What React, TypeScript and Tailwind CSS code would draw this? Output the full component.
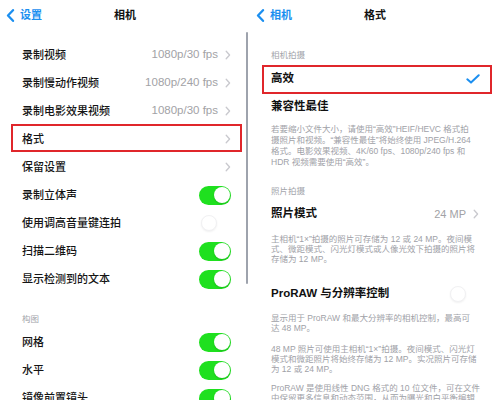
import React from 'react';

const font = { fontFamily: '"Liberation Sans", "Noto Sans CJK SC", sans-serif' };

function BackChevron() {
  return (
    <svg width="9" height="13" viewBox="0 0 9 13" className="shrink-0">
      <path d="M7 1.2 L2 6.5 L7 11.8" fill="none" stroke="#1b8ff0" strokeWidth="2.3" strokeLinecap="round" strokeLinejoin="round" />
    </svg>
  );
}

function SmallChevron() {
  return (
    <svg width="6" height="10" viewBox="0 0 6 10" className="shrink-0">
      <path d="M1.2 1.2 L4.6 5 L1.2 8.8" fill="none" stroke="#c9c9ce" strokeWidth="1.3" strokeLinecap="round" strokeLinejoin="round" />
    </svg>
  );
}

function Toggle({ on }: { on: boolean }) {
  if (!on) {
    return (
      <div className="w-[32px] h-[19px] rounded-full bg-white flex items-center p-[1.5px]">
        <div className="w-[16px] h-[16px] rounded-full bg-white border border-[#f1f1f3] shadow-[0_1px_2px_rgba(0,0,0,0.06)]" />
      </div>
    );
  }
  return (
    <div className="w-[32px] h-[19px] rounded-full bg-[#1fe01f] flex items-center justify-end p-[1.5px]">
      <div className="w-[16px] h-[16px] rounded-full bg-white shadow-[0_1px_2px_rgba(0,0,0,0.15)]" />
    </div>
  );
}

function Header({ back, title }: { back: string; title: string }) {
  return (
    <div className="h-[30px] shrink-0 grid grid-cols-[1fr_auto_1fr] items-center">
      <div className="flex items-center gap-[5px] pl-[6px] text-[11px] font-bold text-[#1b8ff0]">
        <BackChevron />
        <span>{back}</span>
      </div>
      <div className="text-[11px] font-bold text-[#111]">{title}</div>
      <div />
    </div>
  );
}

interface LeftRow {
  label: string;
  value?: string;
  chevron?: boolean;
  toggle?: boolean;
  boxed?: boolean;
}

const videoRows: LeftRow[] = [
  { label: '录制视频', value: '1080p/30 fps', chevron: true },
  { label: '录制慢动作视频', value: '1080p/240 fps', chevron: true },
  { label: '录制电影效果视频', value: '1080p/30 fps', chevron: true },
  { label: '格式', chevron: true, boxed: true },
  { label: '保留设置', chevron: true },
  { label: '录制立体声', toggle: true },
  { label: '使用调高音量键连拍', toggle: false },
  { label: '扫描二维码', toggle: true },
  { label: '显示检测到的文本', toggle: true },
];

const compositionRows: LeftRow[] = [
  { label: '网格', toggle: true },
  { label: '水平', toggle: true },
  { label: '镜像前置镜头', toggle: true },
];

function Row({ row }: { row: LeftRow }) {
  return (
    <div className="relative h-[28px] shrink-0 flex items-center justify-between pl-[22px] pr-[19px]">
      <span className="text-[11px] font-medium text-[#141414]">{row.label}</span>
      <div className="flex items-center gap-[7px]">
        {row.value && <span className="text-[11.5px] text-[#a2a2a6]">{row.value}</span>}
        {row.chevron && <SmallChevron />}
        {row.toggle !== undefined && <Toggle on={row.toggle} />}
      </div>
      {row.boxed && (
        <div className="absolute left-[11px] right-[8px] top-[-1px] bottom-[1px] border-2 border-[#e0262b]" />
      )}
    </div>
  );
}

function CameraPanel() {
  return (
    <div className="relative w-[250px] h-[400px] shrink-0 flex flex-col bg-white overflow-hidden">
      <Header back="设置" title="相机" />
      <div className="shrink-0 flex flex-col pt-[11px]">
        {videoRows.map(r => (
          <Row key={r.label} row={r} />
        ))}
        <div className="h-[35px] shrink-0 pl-[22px] pt-[21px] text-[8.5px] leading-[10px] text-[#a3a5ab]">构图</div>
        {compositionRows.map(r => (
          <Row key={r.label} row={r} />
        ))}
      </div>
      {/* scroll indicator */}
      <div className="absolute right-[2px] top-[32px] h-[252px] w-[2px] rounded-full bg-[#9ea3ad]" />
    </div>
  );
}

function Desc({ lines, leading = 'leading-[10px]', className = '' }: { lines: string[]; leading?: string; className?: string }) {
  return (
    <div className={`shrink-0 pl-[21px] text-[8.5px] ${leading} text-[#a0a1a7] whitespace-nowrap ${className}`}>
      {lines.map(l => (
        <div key={l}>{l}</div>
      ))}
    </div>
  );
}

function FormatPanel() {
  return (
    <div className="w-[250px] h-[400px] shrink-0 flex flex-col bg-white overflow-hidden">
      <Header back="相机" title="格式" />
      <div className="h-[35px] shrink-0 pl-[21px] pt-[20px] text-[8.5px] leading-[10px] text-[#a3a5ab]">相机拍摄</div>

      <div className="relative h-[28px] shrink-0 flex items-center justify-between pl-[21px] pr-[20px]">
        <span className="text-[11.5px] font-semibold text-[#111]">高效</span>
        <svg width="14" height="10" viewBox="0 0 14 10">
          <path d="M1.3 5.3 L5 8.6 L12.7 1.3" fill="none" stroke="#1b8ff0" strokeWidth="2" strokeLinecap="round" strokeLinejoin="round" />
        </svg>
        <div className="absolute left-[12px] right-[8px] top-0 bottom-[-1px] border-2 border-[#e0262b]" />
      </div>
      <div className="h-[28px] shrink-0 flex items-center pl-[21px] pr-[20px]">
        <span className="text-[11.5px] font-semibold text-[#111]">兼容性最佳</span>
      </div>

      <Desc
        leading="leading-[11px]"
        className="pt-[3px]"
        lines={[
          '若要缩小文件大小，请使用“高效”HEIF/HEVC 格式拍',
          '摄照片和视频。“兼容性最佳”将始终使用 JPEG/H.264',
          '格式。电影效果视频、4K/60 fps、1080p/240 fps 和',
          'HDR 视频需要使用“高效”。',
        ]}
      />

      <div className="shrink-0 mt-[18px] pl-[21px] text-[8.5px] leading-[10px] text-[#a3a5ab]">照片拍摄</div>
      <div className="mt-[4px] h-[28px] shrink-0 flex items-center justify-between pl-[21px] pr-[21px]">
        <span className="text-[11.5px] font-semibold text-[#111]">照片模式</span>
        <div className="flex items-center gap-[7px]">
          <span className="text-[11px] text-[#a2a2a6]">24 MP</span>
          <SmallChevron />
        </div>
      </div>
      <Desc
        className="pt-[6px]"
        lines={[
          '主相机“1×”拍摄的照片可存储为 12 或 24 MP。夜间模',
          '式、微距模式、闪光灯模式或人像光效下拍摄的照片将',
          '存储为 12 MP。',
        ]}
      />

      <div className="mt-[16px] h-[28px] shrink-0 flex items-center justify-between pl-[21px] pr-[20px]">
        <span className="text-[11.5px] font-semibold text-[#111]">ProRAW 与分辨率控制</span>
        <Toggle on={false} />
      </div>
      <Desc
        className="pt-[5px]"
        lines={['显示用于 ProRAW 和最大分辨率的相机控制，最高可', '达 48 MP。']}
      />
      <Desc
        className="mt-[11px]"
        lines={[
          '48 MP 照片可使用主相机“1×”拍摄。夜间模式、闪光灯',
          '模式和微距照片将始终存储为 12 MP。实况照片可存储',
          '为 12 或 24 MP。',
        ]}
      />
      <Desc
        className="mt-[9px]"
        lines={[
          'ProRAW 是使用线性 DNG 格式的 10 位文件，可在文件',
          '中保留更多信息和动态范围，从而为曝光和白平衡编辑',
        ]}
      />
    </div>
  );
}

export default function App() {
  return (
    <div className="w-[500px] h-[400px] flex overflow-hidden bg-white" style={font}>
      <CameraPanel />
      <FormatPanel />
    </div>
  );
}
